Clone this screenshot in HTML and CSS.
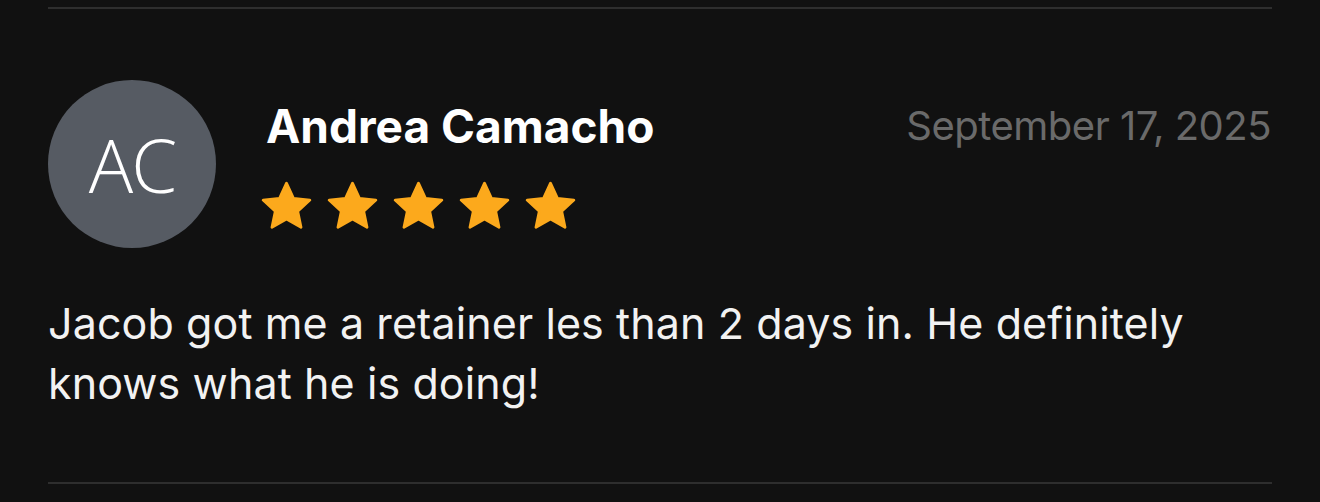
FILE: index.html
```html
<!DOCTYPE html>
<html>
	<head>
		<meta charset="UTF-8">
		<title>Review</title>
		<link rel="stylesheet" href="styles.css">
	</head>
	<body>
		<div class="review">
			<div class="review-head">
				<div class="avatar">AC</div>
				<div class="who">
					<div class="name">Andrea Camacho</div>
					<div class="stars">
						<svg viewBox="0 0 24 24"><path d="M12 1.8l3.05 6.6 7.15.8-5.3 4.85 1.45 7.05L12 17.5l-6.35 3.6 1.45-7.05L1.8 9.2l7.15-.8z"/></svg>
						<svg viewBox="0 0 24 24"><path d="M12 1.8l3.05 6.6 7.15.8-5.3 4.85 1.45 7.05L12 17.5l-6.35 3.6 1.45-7.05L1.8 9.2l7.15-.8z"/></svg>
						<svg viewBox="0 0 24 24"><path d="M12 1.8l3.05 6.6 7.15.8-5.3 4.85 1.45 7.05L12 17.5l-6.35 3.6 1.45-7.05L1.8 9.2l7.15-.8z"/></svg>
						<svg viewBox="0 0 24 24"><path d="M12 1.8l3.05 6.6 7.15.8-5.3 4.85 1.45 7.05L12 17.5l-6.35 3.6 1.45-7.05L1.8 9.2l7.15-.8z"/></svg>
						<svg viewBox="0 0 24 24"><path d="M12 1.8l3.05 6.6 7.15.8-5.3 4.85 1.45 7.05L12 17.5l-6.35 3.6 1.45-7.05L1.8 9.2l7.15-.8z"/></svg>
					</div>
				</div>
				<div class="date">September 17, 2025</div>
			</div>
			<p class="text">Jacob got me a retainer les than 2 days in. He definitely<br>knows what he is doing!</p>
		</div>
	</body>
</html>
```

FILE: styles.css
```css
*{
	margin:0;
	padding:0;
	box-sizing:border-box;
}
html,body{
	background:#111111;
}
body{
	padding:7px 48px 0;
	font-family:Inter,"Liberation Sans",sans-serif;
	color:#fff;
}
.review{
	border-top:2px solid #2e2e2e;
	border-bottom:2px solid #2e2e2e;
	height:477px;
	padding-top:71px;
}
.review-head{
	display:flex;
	align-items:flex-start;
}
.avatar{
	width:168px;
	height:168px;
	border-radius:50%;
	background:#565b63;
	display:flex;
	align-items:center;
	justify-content:center;
	font-family:"Open Sans",sans-serif;
	font-weight:300;
	font-size:74px;
	letter-spacing:-2px;
	color:#fff;
	flex-shrink:0;
}
.who{
	margin-left:50px;
	padding-top:21px;
	flex:1;
}
.name{
	font-size:46px;
	font-weight:700;
	line-height:50px;
}
.stars{
	display:flex;
	gap:11px;
	margin-top:28px;
	margin-left:-7px;
}
.stars svg{
	width:55px;
	height:55px;
	fill:#fca91c;
	stroke:#fca91c;
	stroke-width:1.2;
	stroke-linejoin:round;
}
.date{
	font-size:40px;
	letter-spacing:-0.5px;
	color:#6a6a6a;
	padding-top:24px;
	line-height:44px;
	margin-right:1px;
}
.text{
	margin-top:45px;
	font-size:43px;
	line-height:60px;
	color:#f2f2f2;
	letter-spacing:0.1px;
}
```
